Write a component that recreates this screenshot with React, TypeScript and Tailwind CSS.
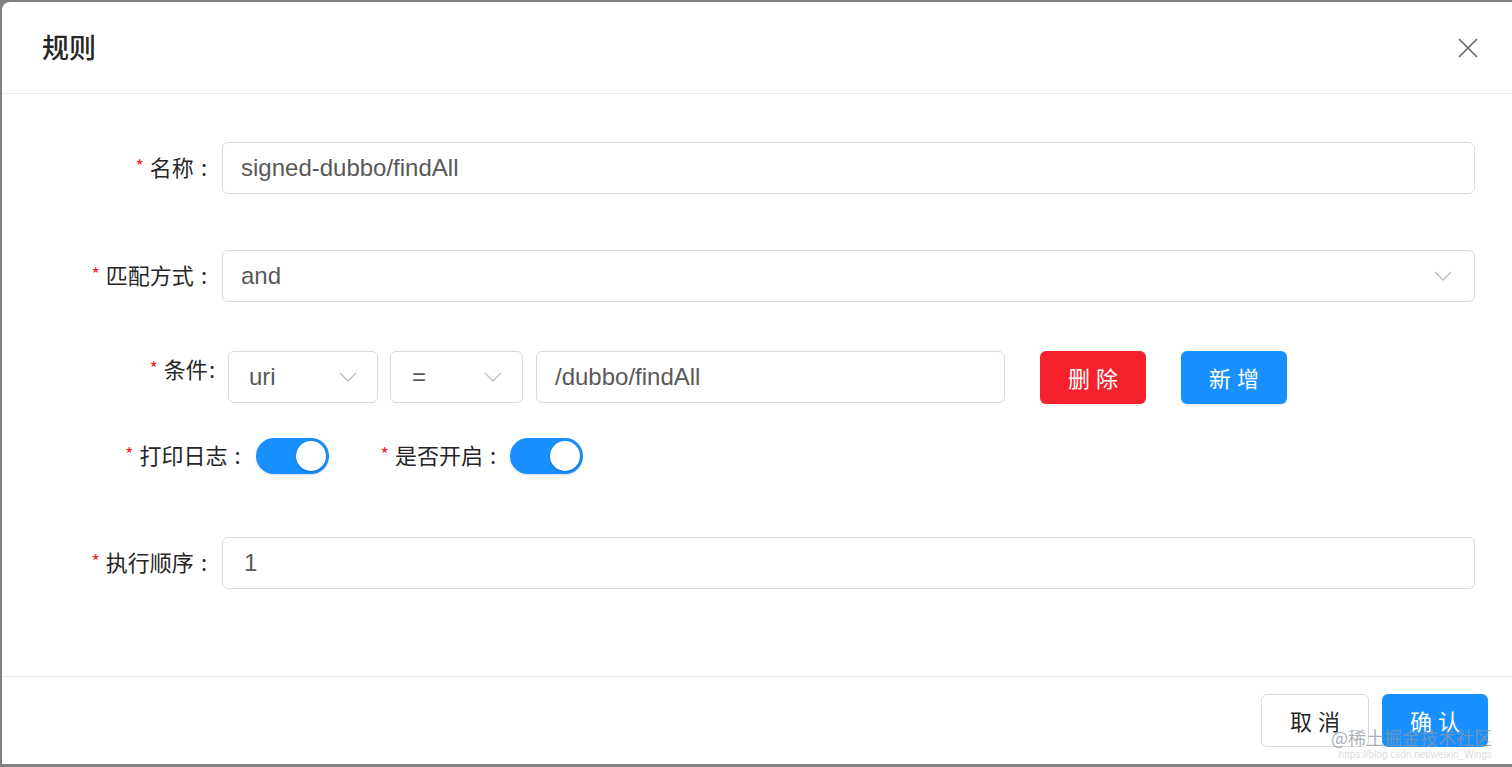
import React from "react";

const font = { fontFamily: '"Liberation Sans", "Noto Sans CJK SC", sans-serif' };
const cjk = { fontFamily: '"Noto Sans CJK SC", sans-serif' };

function Chevron({ className = "" }: { className?: string }) {
  return (
    <svg width="18" height="10" viewBox="0 0 18 10" className={className} fill="none">
      <path d="M1 1 L9 9 L17 1" stroke="#bfbfbf" strokeWidth="1.4" />
    </svg>
  );
}

function Label({ text, gap = 7 }: { text: string; gap?: number }) {
  return (
    <span className="text-[22px] leading-[30px] text-[#262626] whitespace-nowrap flex items-center relative top-[-2px]" style={cjk}>
      <span className="text-[#f5222d] text-[18px] mr-[6px] relative top-[-1px]">*</span>
      <span>{text}</span>
      <span className={gap === 7 ? "ml-[7px]" : "ml-[1px]"}>:</span>
    </span>
  );
}

function Toggle() {
  return (
    <div className="w-[73px] h-[36px] rounded-full bg-[#1890ff] flex items-center justify-end pr-[3px] shadow-[0_1px_2px_rgba(0,0,0,0.15)]">
      <div className="w-[30px] h-[30px] rounded-full bg-white shadow-[0_1px_3px_rgba(0,40,100,0.3)]" />
    </div>
  );
}

export default function App() {
  return (
    <div className="w-[1512px] h-[767px] bg-[#808080] pt-[2px] pl-[2px] pb-[3px]" style={font}>
      <div className="relative w-full h-full bg-white rounded-tl-[8px] flex flex-col overflow-hidden">
        {/* Header */}
        <div className="h-[92px] border-b border-[#e8e8e8] flex items-center justify-between pl-[40px] pr-[34px] shrink-0">
          <span className="text-[27px] font-medium text-[#262626]" style={cjk}>规则</span>
          <svg width="20" height="20" viewBox="0 0 20 20" fill="none">
            <path d="M1 1 L19 19 M19 1 L1 19" stroke="#666" strokeWidth="1.6" />
          </svg>
        </div>

        {/* Body */}
        <div className="flex-1 flex flex-col pt-[48px] pr-[37px]">
          {/* Row 1 */}
          <div className="flex items-center">
            <div className="w-[205px] flex justify-end">
              <Label text="名称" />
            </div>
            <div className="ml-[15px] flex-1 h-[52px] border border-[#d9d9d9] rounded-[6px] flex items-center pl-[18px] text-[24px] text-[#595959]">
              signed-dubbo/findAll
            </div>
          </div>

          {/* Row 2 */}
          <div className="flex items-center mt-[56px]">
            <div className="w-[205px] flex justify-end">
              <Label text="匹配方式" />
            </div>
            <div className="ml-[15px] flex-1 h-[52px] border border-[#d9d9d9] rounded-[6px] flex items-center justify-between pl-[18px] pr-[22px] text-[24px] text-[#595959]">
              <span>and</span>
              <Chevron />
            </div>
          </div>

          {/* Row 3 */}
          <div className="flex items-start mt-[49px]">
            <div className="w-[213px] flex justify-end pt-[4px]">
              <Label text="条件" gap={1} />
            </div>
            <div className="ml-[13px] w-[150px] h-[52px] border border-[#d9d9d9] rounded-[6px] flex items-center justify-between pl-[20px] pr-[20px] text-[24px] text-[#595959]">
              <span>uri</span>
              <Chevron />
            </div>
            <div className="ml-[12px] w-[133px] h-[52px] border border-[#d9d9d9] rounded-[6px] flex items-center justify-between pl-[21px] pr-[20px] text-[24px] text-[#595959]">
              <span>=</span>
              <Chevron />
            </div>
            <div className="ml-[13px] w-[469px] h-[52px] border border-[#d9d9d9] rounded-[6px] flex items-center pl-[18px] text-[24px] text-[#595959]">
              /dubbo/findAll
            </div>
            <button className="ml-[35px] w-[106px] h-[53px] rounded-[6px] bg-[#f5222d] text-white text-[22px] tracking-[6px] pl-[6px] shadow-[0_2px_0_rgba(0,0,0,0.05)]" style={cjk}>
              删除
            </button>
            <button className="ml-[35px] w-[106px] h-[53px] rounded-[6px] bg-[#1890ff] text-white text-[22px] tracking-[6px] pl-[6px] shadow-[0_2px_0_rgba(0,0,0,0.05)]" style={cjk}>
              新增
            </button>
          </div>

          {/* Row 4 */}
          <div className="flex items-center mt-[34px] pl-[123px]">
            <Label text="打印日志" />
            <div className="ml-[15px]">
              <Toggle />
            </div>
            <div className="ml-[52px]">
              <Label text="是否开启" />
            </div>
            <div className="ml-[14px]">
              <Toggle />
            </div>
          </div>

          {/* Row 5 */}
          <div className="flex items-center mt-[63px]">
            <div className="w-[205px] flex justify-end">
              <Label text="执行顺序" />
            </div>
            <div className="ml-[15px] flex-1 h-[52px] border border-[#d9d9d9] rounded-[6px] flex items-center pl-[21px] text-[24px] text-[#595959]">
              1
            </div>
          </div>
        </div>

        {/* Footer */}
        <div className="h-[88px] border-t border-[#e8e8e8] flex items-start justify-end pt-[17px] pr-[24px] shrink-0">
          <button className="w-[108px] h-[53px] rounded-[6px] border border-[#d9d9d9] bg-white text-[#262626] text-[22px] tracking-[6px] pl-[6px]" style={cjk}>
            取消
          </button>
          <button className="ml-[13px] w-[106px] h-[53px] rounded-[6px] bg-[#1890ff] text-white text-[22px] tracking-[6px] pl-[6px]" style={cjk}>
            确认
          </button>
        </div>

        {/* Watermark */}
        <div className="absolute right-[20px] bottom-[4px] flex flex-col items-end pointer-events-none">
          <span className="text-[18px] leading-[20px] text-[rgba(140,150,160,0.75)]" style={cjk}>@稀土掘金技术社区</span>
          <span className="text-[10px] leading-[11px] text-[rgba(205,205,205,0.7)] mt-[2px]">https://blog.csdn.net/weixin_Wings</span>
        </div>
      </div>
    </div>
  );
}
